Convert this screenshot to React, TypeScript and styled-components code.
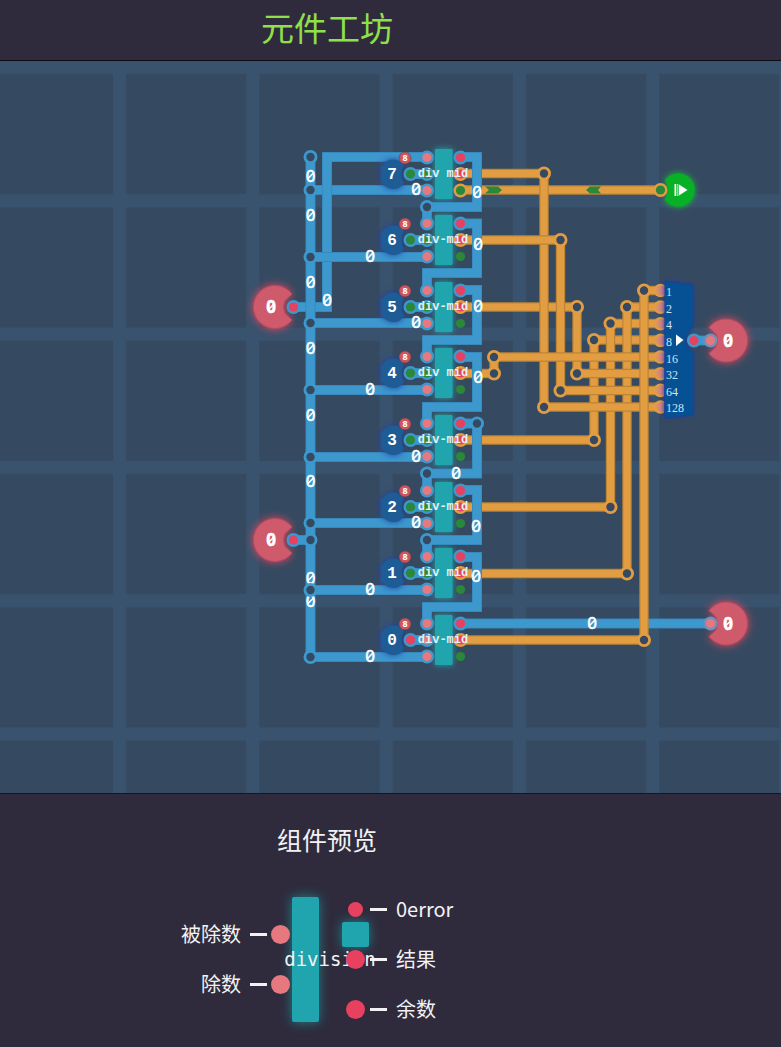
import React from "react";
import styled, { createGlobalStyle } from "styled-components";

const GlobalStyle = createGlobalStyle`
  * { box-sizing: border-box; }
  body {
    margin: 0;
    background: #2f2b3c;
    color: #f2f2f5;
    font-family: "Noto Sans CJK SC", "Noto Sans", sans-serif;
  }
`;

const BLUE = "#3d98ce";
const BLUE_EDGE = "#3585b8";
const ORANGE = "#e29d43";
const ORANGE_EDGE = "#bd8433";
const BOARD = "#354a61";
const RED = "#e8405f";
const PINK = "#e5797f";
const GREEN = "#2b8739";
const TEAL = "#20a5ae";

const Page = styled.div`
  display: flex;
  flex-direction: column;
  min-height: 100vh;
`;

const Header = styled.header`
  display: flex;
  align-items: center;
  justify-content: center;
  height: 61px;
  padding: 0 127px 6px 0;
  border-bottom: 1px solid #0c0c12;
`;

const Title = styled.h1`
  margin: 0;
  font-size: 33px;
  font-weight: 400;
  line-height: 40px;
  color: #8fe04b;
`;

const Board = styled.main`
  display: flex;
  flex: 1;
  min-height: 640px;
  background: ${BOARD};
  border-bottom: 1px solid #14161e;
`;

const Circuit = styled.svg`
  display: block;
  flex: 1;
  min-width: 0;
`;

const Glyph = styled.text<{ $size: number; $face?: "slab" | "plain"; $color?: string; $bold?: boolean }>`
  font-family: ${(p) => (p.$face === "slab" ? '"Liberation Mono", monospace' : '"Noto Sans", sans-serif')};
  font-size: ${(p) => p.$size}px;
  font-weight: ${(p) => (p.$bold ? 700 : 400)};
  fill: ${(p) => p.$color ?? "#fff"};
  text-anchor: middle;
`;

const BitLabel = styled.text`
  font-family: "Liberation Serif", serif;
  font-size: 12px;
  fill: #cfe3f5;
`;

const Glow = styled.g<{ $color: string; $spread: number }>`
  filter: drop-shadow(0 0 ${(p) => p.$spread}px ${(p) => p.$color});
`;

const Preview = styled.section`
  display: flex;
  flex-direction: column;
  align-items: center;
  padding: 28px 127px 25px 0;
`;

const PreviewTitle = styled.h2`
  margin: 0 0 41px;
  font-size: 25px;
  font-weight: 400;
  line-height: 34px;
`;

const Component = styled.div`
  display: grid;
  grid-template-columns: 60px 30px 21px 27px 23px 27px 27px 77px;
  grid-template-rows: repeat(5, 25px);
  align-items: center;
`;

const Block = styled.div<{ $col: number; $rows: string }>`
  grid-column: ${(p) => p.$col};
  grid-row: ${(p) => p.$rows};
  align-self: stretch;
  border-radius: 2px;
  background: ${TEAL};
  box-shadow: 0 0 12px #20a5aeb0;
`;

const BlockName = styled.span`
  grid-column: 3 / 8;
  grid-row: 3;
  padding-right: 7px;
  font-family: "DejaVu Sans Mono", monospace;
  font-size: 19px;
  line-height: 25px;
  text-align: center;
`;

const PortLabel = styled.span<{ $side: "in" | "out"; $row: number }>`
  grid-column: ${(p) => (p.$side === "in" ? 1 : 8)};
  grid-row: ${(p) => p.$row};
  padding-bottom: 1px;
  font-size: 20px;
  line-height: 24px;
  white-space: nowrap;
`;

const Dash = styled.span<{ $side: "in" | "out"; $row: number }>`
  grid-column: ${(p) => (p.$side === "in" ? 2 : 7)};
  grid-row: ${(p) => p.$row};
  justify-self: ${(p) => (p.$side === "in" ? "end" : "start")};
  width: 17px;
  height: 3px;
  margin: 0 4px 0 1px;
  background: #f2f2f5;
`;

const Dot = styled.span<{ $side: "in" | "out"; $row: number; $small?: boolean }>`
  grid-column: ${(p) => (p.$side === "in" ? 3 : 6)};
  grid-row: ${(p) => p.$row};
  justify-self: ${(p) => (p.$side === "in" ? "start" : "center")};
  width: ${(p) => (p.$small ? 15 : 19)}px;
  height: ${(p) => (p.$small ? 15 : 19)}px;
  border-radius: 50%;
  background: ${(p) => (p.$side === "in" ? PINK : RED)};
`;

type WireProps = { d: string; kind: "blue" | "orange" };

function Wire({ d, kind }: WireProps) {
  const blue = kind === "blue";
  return (
    <g fill="none" strokeLinejoin="miter" strokeLinecap="butt">
      <path d={d} stroke={blue ? BLUE_EDGE : ORANGE_EDGE} strokeWidth={blue ? 10 : 9.4} />
      <path d={d} stroke={blue ? BLUE : ORANGE} strokeWidth={blue ? 8.6 : 7} />
    </g>
  );
}

function Joint({ x, y, kind }: { x: number; y: number; kind: "blue" | "orange" }) {
  return <circle cx={x} cy={y} r={5.6} fill={BOARD} stroke={kind === "blue" ? BLUE : ORANGE} strokeWidth={2.8} />;
}

function Port({ x, y, ring, fill }: { x: number; y: number; ring?: string; fill: string }) {
  return (
    <g>
      {ring && <circle cx={x} cy={y} r={7} fill={ring} />}
      <circle cx={x} cy={y} r={4.6} fill={fill} />
    </g>
  );
}

function Zero({ x, y, bold }: { x: number; y: number; bold?: boolean }) {
  return (
    <g>
      <Glyph $size={17} $bold={bold} x={x} y={y + 6} stroke="#fff" strokeWidth={0.5}>0</Glyph>
      <path d={`M${x + 3.4} ${y - 3.6}L${x - 3.4} ${y + 3.6}`} stroke="#fff" strokeWidth={1.5} />
    </g>
  );
}

// Rows of div-mid units, top to bottom, numbered by the bit they produce.
const units = [7, 6, 5, 4, 3, 2, 1, 0].map((bit, i) => ({ bit, y: Math.round(173.5 + i * 66.6) }));

const taps = [
  { y: 190, label: 416 },
  { y: 257, label: 370 },
  { y: 323, label: 416 },
  { y: 390, label: 370 },
  { y: 457, label: 416 },
  { y: 523, label: 416 },
  { y: 590, label: 370 },
  { y: 657, label: 370 },
];

const carries = [
  "M460 157H477V207H427V223",
  "M460 223.5H477V273H427V290",
  "M460 290H477V340H427V357",
  "M460 357H477V407H427V423",
  "M460 423.5H477V473.500H427V490",
  "M460 490H477V540H427V557",
  "M460 557H477V607H427V623",
];

const orangeWires = [
  "M460 440H594V340H660",
  "M460 507H610.500V323.500H660",
  "M460 573.500H627V307H660",
  "M460 190H660",
  "M460 307H577V373.500H660",
  "M460 173.500H544V407H660",
  "M460 240H560.500V390.500H660",
  "M460 373.500H494V357H660",
];

const orangeJoints = [
  [544, 173.5], [544, 407], [560.5, 240], [560.5, 390.5], [577, 307], [577, 373.5],
  [494, 373.5], [494, 357], [594, 440], [594, 340], [610.5, 507], [610.5, 323.5],
  [627, 573.5], [627, 307], [644, 640], [644, 290.5],
];

const trunkLabels = [176, 215, 282, 348, 415, 481, 578, 601];

const carryLabels = [
  [477, 192], [478, 244], [478, 306], [478, 377], [456, 473], [476, 526], [476, 576], [592, 623], [327, 300],
];

const decoderBits = ["1", "2", "4", "8", "16", "32", "64", "128"];

function Unit({ bit, y }: { bit: number; y: number }) {
  const last = bit === 0;
  const hyphen = bit === 7 || bit === 4 || bit === 1 ? " " : "-";
  return (
    <g>
      <Glow $color="#2440a8" $spread={3}>
        <path
          d={`M383 ${y - 9}Q387 ${y - 15} 394 ${y - 14.5}Q400 ${y - 14} 404 ${y - 9}Q399 ${y} 404 ${y + 9}Q400 ${y + 15} 394 ${y + 15}Q387 ${y + 15} 382 ${y + 9}Q380 ${y + 7} 381 ${y + 5}V${y - 4}Q379 ${y - 7} 383 ${y - 9}Z`}
          fill="#1e5c96"
        />
      </Glow>
      <Glyph $size={16} $face="slab" $bold x={392} y={y + 5}>{bit}</Glyph>
      <circle cx={405} cy={y - 16} r={6} fill="#d0555a" stroke="#5b4256" strokeWidth={0.6} />
      <Glyph $size={9} $bold x={405} y={y - 13}>8</Glyph>
      <Glow $color="#20a5ae" $spread={3}>
        <rect x={435} y={y - 25} width={17.5} height={50} rx={1} fill={TEAL} />
      </Glow>
      <Wire kind="blue" d={`M410 ${y}H427`} />
      <Port x={410.5} y={y} ring={BLUE} fill={last ? RED : GREEN} />
      <Port x={427} y={y - 16.5} ring={BLUE} fill={PINK} />
      <Port x={427} y={y} ring={BLUE} fill={last ? PINK : GREEN} />
      <Port x={427} y={y + 16.5} ring={BLUE} fill={PINK} />
      <Port x={460.5} y={y - 16.5} ring={BLUE} fill={RED} />
      <Port x={460.5} y={y} ring={ORANGE} fill={RED} />
      <Port x={460.5} y={y + 16.5} ring={bit === 7 ? ORANGE : undefined} fill={GREEN} />
      <Glyph $size={12} $face="slab" $bold $color="#e3f1f4" x={443} y={y + 3} xmlSpace="preserve">
        {`div${hyphen}mid`}
      </Glyph>
    </g>
  );
}

function Pin({ x, y, side }: { x: number; y: number; side: "in" | "out" }) {
  return (
    <g>
      <Glow $color="#e04860" $spread={4}>
        <path
          transform={`translate(${x} ${y})${side === "out" ? " scale(-1 1)" : ""}`}
          d="M17 -13A21.500 21.500 0 1 0 17 13L10 6.500Q7 0 10 -6.500Z"
          fill="#cf5a6c"
          stroke="#b84a60"
          strokeWidth={1}
        />
      </Glow>
      <Zero bold x={side === "in" ? x - 4 : x + 2} y={y} />
    </g>
  );
}

function Decoder() {
  return (
    <g>
      {decoderBits.map((bit, i) => (
        <g key={bit}>
          <circle cx={660.5} cy={290.5 + i * 16.64} r={6.8} fill={ORANGE} />
          <circle cx={661} cy={290.5 + i * 16.64} r={4.8} fill="url(#bitPort)" />
        </g>
      ))}
      <Glow $color="#1a3f9c" $spread={2}>
        <path d="M665 281L693 285V326L687 334Q684 340 687 346L693 353V415L664.500 418Z" fill="#055194" stroke="#1f3f98" strokeWidth={0.8} />
      </Glow>
      {decoderBits.map((bit, i) => (
        <BitLabel key={bit} x={666} y={Math.round(296 + i * 16.64)}>{bit}</BitLabel>
      ))}
      <path d="M676 334.500L683.500 340L676 346Z" fill="#fff" />
    </g>
  );
}

function CircuitBoard() {
  return (
    <Circuit role="img" aria-label="division">
      <defs>
        <pattern id="tiles" x={-20.3} y={0} width={133.3} height={133.3} patternUnits="userSpaceOnUse">
          <rect width={133.3} height={133.3} fill="#39526d" />
          <rect x={13} y={13} width={120.3} height={120.3} fill={BOARD} />
        </pattern>
        <linearGradient id="bitPort">
          <stop offset="0" stopColor="#d9946a" />
          <stop offset="1" stopColor="#c9748f" />
        </linearGradient>
      </defs>
      <rect width="100%" height="100%" fill="url(#tiles)" />

      <g transform="translate(0 -61)">
        {taps.map((t) => <Wire key={t.y} kind="blue" d={`M310 ${t.y}H427`} />)}
        <Wire kind="blue" d="M427 157H327V307H294" />
        <Wire kind="blue" d="M310 257H427" />
        <Wire kind="blue" d="M294 540H310" />
        <Wire kind="blue" d="M310.500 157V657" />

        {orangeWires.map((d) => <Wire key={d} kind="orange" d={d} />)}
        <path d="M485 186.500H498L502 190L498 193.500H485L489 190Z M586 190L590 186.500H601L598 190L601 193.500H590Z" fill={GREEN} />
        <Wire kind="blue" d="M460 623.500H710" />
        <Wire kind="orange" d="M460 640H644V290.500H660" />
        {carries.map((d) => <Wire key={d} kind="blue" d={d} />)}
        {orangeJoints.map(([x, y]) => <Joint key={`${x}-${y}`} x={x} y={y} kind="orange" />)}

        {trunkLabels.map((y) => <Zero key={y} x={310.5} y={y} />)}
        {[157, 540, ...taps.map((t) => t.y)].map((y) => <Joint key={y} x={310.5} y={y} kind="blue" />)}
        <Joint x={427} y={207} kind="blue" />
        <Joint x={427} y={473.5} kind="blue" />
        <Joint x={427} y={540} kind="blue" />
        <Joint x={477} y={423.5} kind="blue" />

        {units.map((u) => <Unit key={u.bit} {...u} />)}
        {taps.map((t) => <Zero key={t.y} x={t.label} y={t.y - 1} />)}
        {carryLabels.map(([x, y]) => <Zero key={`${x}-${y}`} x={x} y={y} />)}

        <Pin x={275} y={307} side="in" />
        <Pin x={275} y={540} side="in" />
        <Port x={293.5} y={307} ring={BLUE} fill={RED} />
        <Port x={293.5} y={540} ring={BLUE} fill={RED} />

        <Decoder />
        <Pin x={726} y={340.5} side="out" />
        <Pin x={726} y={623.5} side="out" />
        <Wire kind="blue" d="M694 340.500H710" />
        <Port x={694} y={340.5} ring={BLUE} fill={RED} />
        <Port x={710.5} y={340.5} ring="#6f8fbc" fill={PINK} />
        <Port x={710.5} y={623.5} ring="#6f8fbc" fill={PINK} />

        <Glow $color="#12c832" $spread={3}>
          <path d="M665 180A16.500 16.500 0 1 1 665 200Q671 190 665 180Z" fill="#08b025" />
        </Glow>
        <Port x={660.5} y={190} ring={ORANGE} fill={GREEN} />
        <path d="M674.500 184H676V196H674.500ZM679 184.500L687.500 190L679 195.500Z" fill="#fff" />
        <path d="M676.500 184H678.500V196H676.500Z" fill="#8de09a" />
      </g>
    </Circuit>
  );
}

const inputs = [
  { name: "被除数", row: 2 },
  { name: "除数", row: 4 },
];

const outputs = [
  { name: "0error", row: 1, small: true },
  { name: "结果", row: 3 },
  { name: "余数", row: 5 },
];

const InLabel = styled(PortLabel)`
  text-align: right;
`;

export default function App() {
  return (
    <Page>
      <GlobalStyle />
      <Header>
        <Title>元件工坊</Title>
      </Header>
      <Board>
        <CircuitBoard />
      </Board>
      <Preview>
        <PreviewTitle>组件预览</PreviewTitle>
        <Component>
          <Block $col={4} $rows="1 / 6" />
          <Block $col={6} $rows="2" />
          <BlockName>division</BlockName>
          {inputs.map((p) => (
            <React.Fragment key={p.name}>
              <InLabel $side="in" $row={p.row}>{p.name}</InLabel>
              <Dash $side="in" $row={p.row} />
              <Dot $side="in" $row={p.row} />
            </React.Fragment>
          ))}
          {outputs.map((p) => (
            <React.Fragment key={p.name}>
              <Dot $side="out" $row={p.row} $small={p.small} />
              <Dash $side="out" $row={p.row} />
              <PortLabel $side="out" $row={p.row}>{p.name}</PortLabel>
            </React.Fragment>
          ))}
        </Component>
      </Preview>
    </Page>
  );
}
